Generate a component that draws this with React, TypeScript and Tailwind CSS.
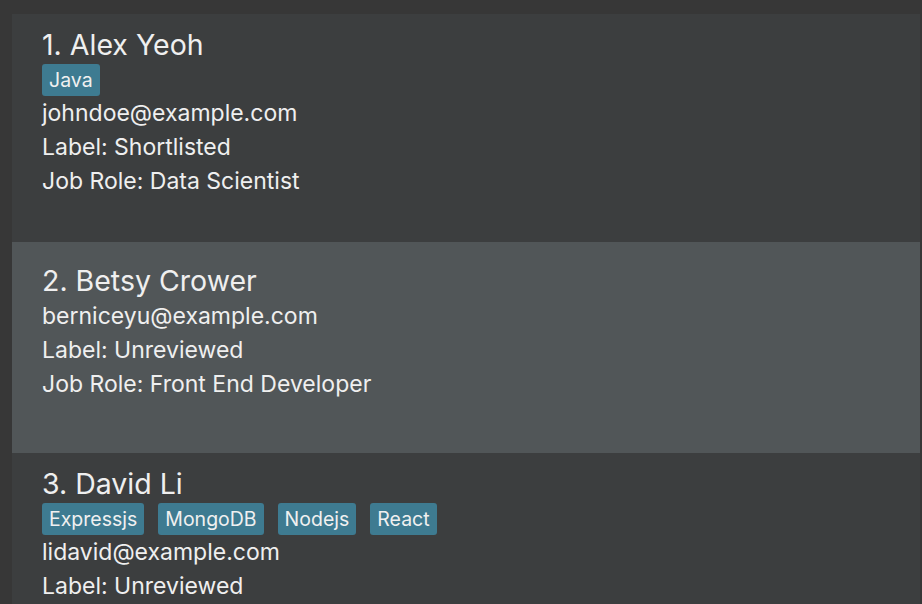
import React from "react";

type Person = {
  name: string;
  tags: string[];
  email: string;
  label: string;
  role?: string;
  selected?: boolean;
};

const people: Person[] = [
  { name: "1. Alex Yeoh", tags: ["Java"], email: "johndoe@example.com", label: "Shortlisted", role: "Data Scientist" },
  { name: "2. Betsy Crower", tags: [], email: "berniceyu@example.com", label: "Unreviewed", role: "Front End Developer", selected: true },
  { name: "3. David Li", tags: ["Expressjs", "MongoDB", "Nodejs", "React"], email: "lidavid@example.com", label: "Unreviewed" },
];

function Card({ p }: { p: Person }) {
  return (
    <div
      className={
        p.selected
          ? "bg-[#515658] pl-[30px] pt-[21px] pb-[52px] flex flex-col"
          : "bg-[#3c3e3f] pl-[30px] pt-[13px] pb-[44px] flex flex-col"
      }
    >
      <div className="text-[28.5px] leading-[36px] text-[#efefef]">{p.name}</div>
      {p.tags.length > 0 && (
        <div className="flex gap-[14px] mt-[1px]">
          {p.tags.map((t) => (
            <span
              key={t}
              className="bg-[#3e7b91] text-[#f0f0f0] rounded-[3px] h-[32px] px-[7px] text-[19.5px] leading-[32px]"
            >
              {t}
            </span>
          ))}
        </div>
      )}
      <div className="text-[23px] leading-[34px] text-[#efefef]">{p.email}</div>
      <div className="text-[23px] leading-[34px] text-[#efefef]">Label: {p.label}</div>
      {p.role && <div className="text-[23px] leading-[34px] text-[#efefef]">Job Role: {p.role}</div>}
    </div>
  );
}

export default function App() {
  return (
    <div
      className="w-[922px] h-[604px] overflow-hidden bg-[#373737] pt-[14px] pl-[12px] pr-[2px]"
      style={{ fontFamily: "Inter, 'Noto Sans', sans-serif" }}
    >
      <div className="flex flex-col">
        {people.map((p) => (
          <Card key={p.name} p={p} />
        ))}
      </div>
    </div>
  );
}
